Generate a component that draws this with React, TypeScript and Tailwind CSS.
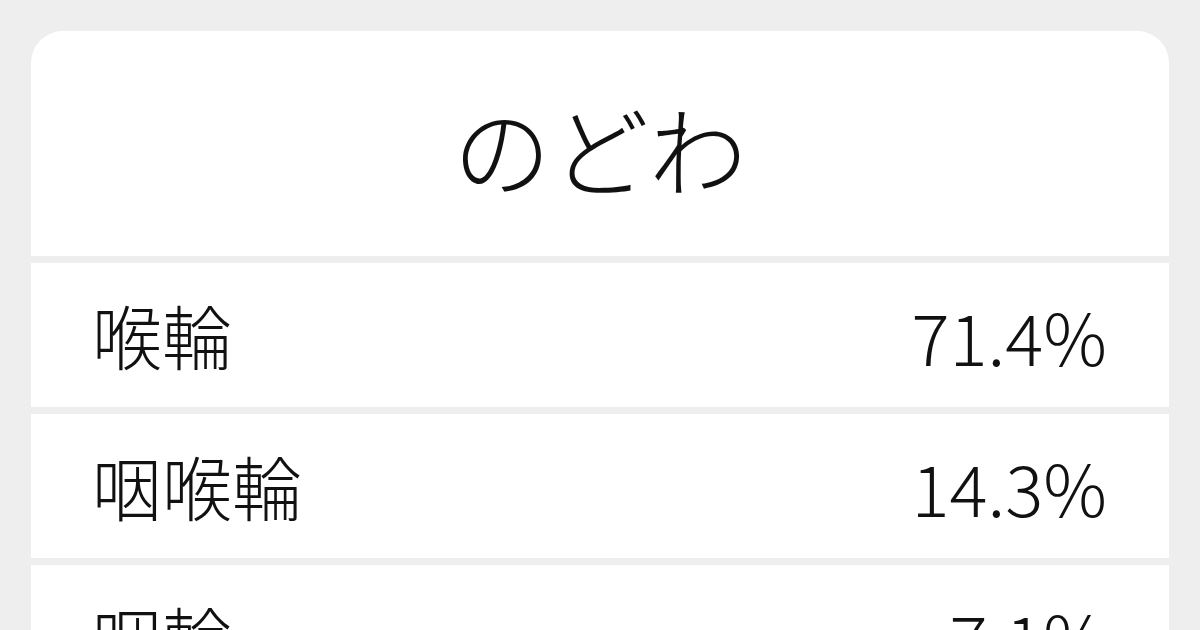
import React from "react";

const rows = [
  { w: "喉輪", p: "71.4%" },
  { w: "咽喉輪", p: "14.3%" },
  { w: "咽輪", p: "7.1%" },
];

export default function App() {
  return (
    <div
      className="w-[1200px] h-[630px] overflow-hidden bg-[#eeeeee] pt-[31px] px-[31px] text-[#111111]"
      style={{ fontFamily: '"Noto Sans CJK JP", "Noto Sans", sans-serif' }}
    >
      <div className="flex flex-col gap-[7px] rounded-t-[32px] overflow-hidden">
        <div className="bg-white h-[225px] flex items-center justify-center">
          <span className="text-[98px] leading-none font-light translate-y-[2px]">のどわ</span>
        </div>
        {rows.map((r) => (
          <div
            key={r.w}
            className="bg-white h-[144px] flex items-center justify-between pl-[61px] pr-[62px]"
          >
            <span className="text-[70px] leading-none font-light">{r.w}</span>
            <span className="text-[71px] leading-none font-light">{r.p}</span>
          </div>
        ))}
      </div>
    </div>
  );
}
